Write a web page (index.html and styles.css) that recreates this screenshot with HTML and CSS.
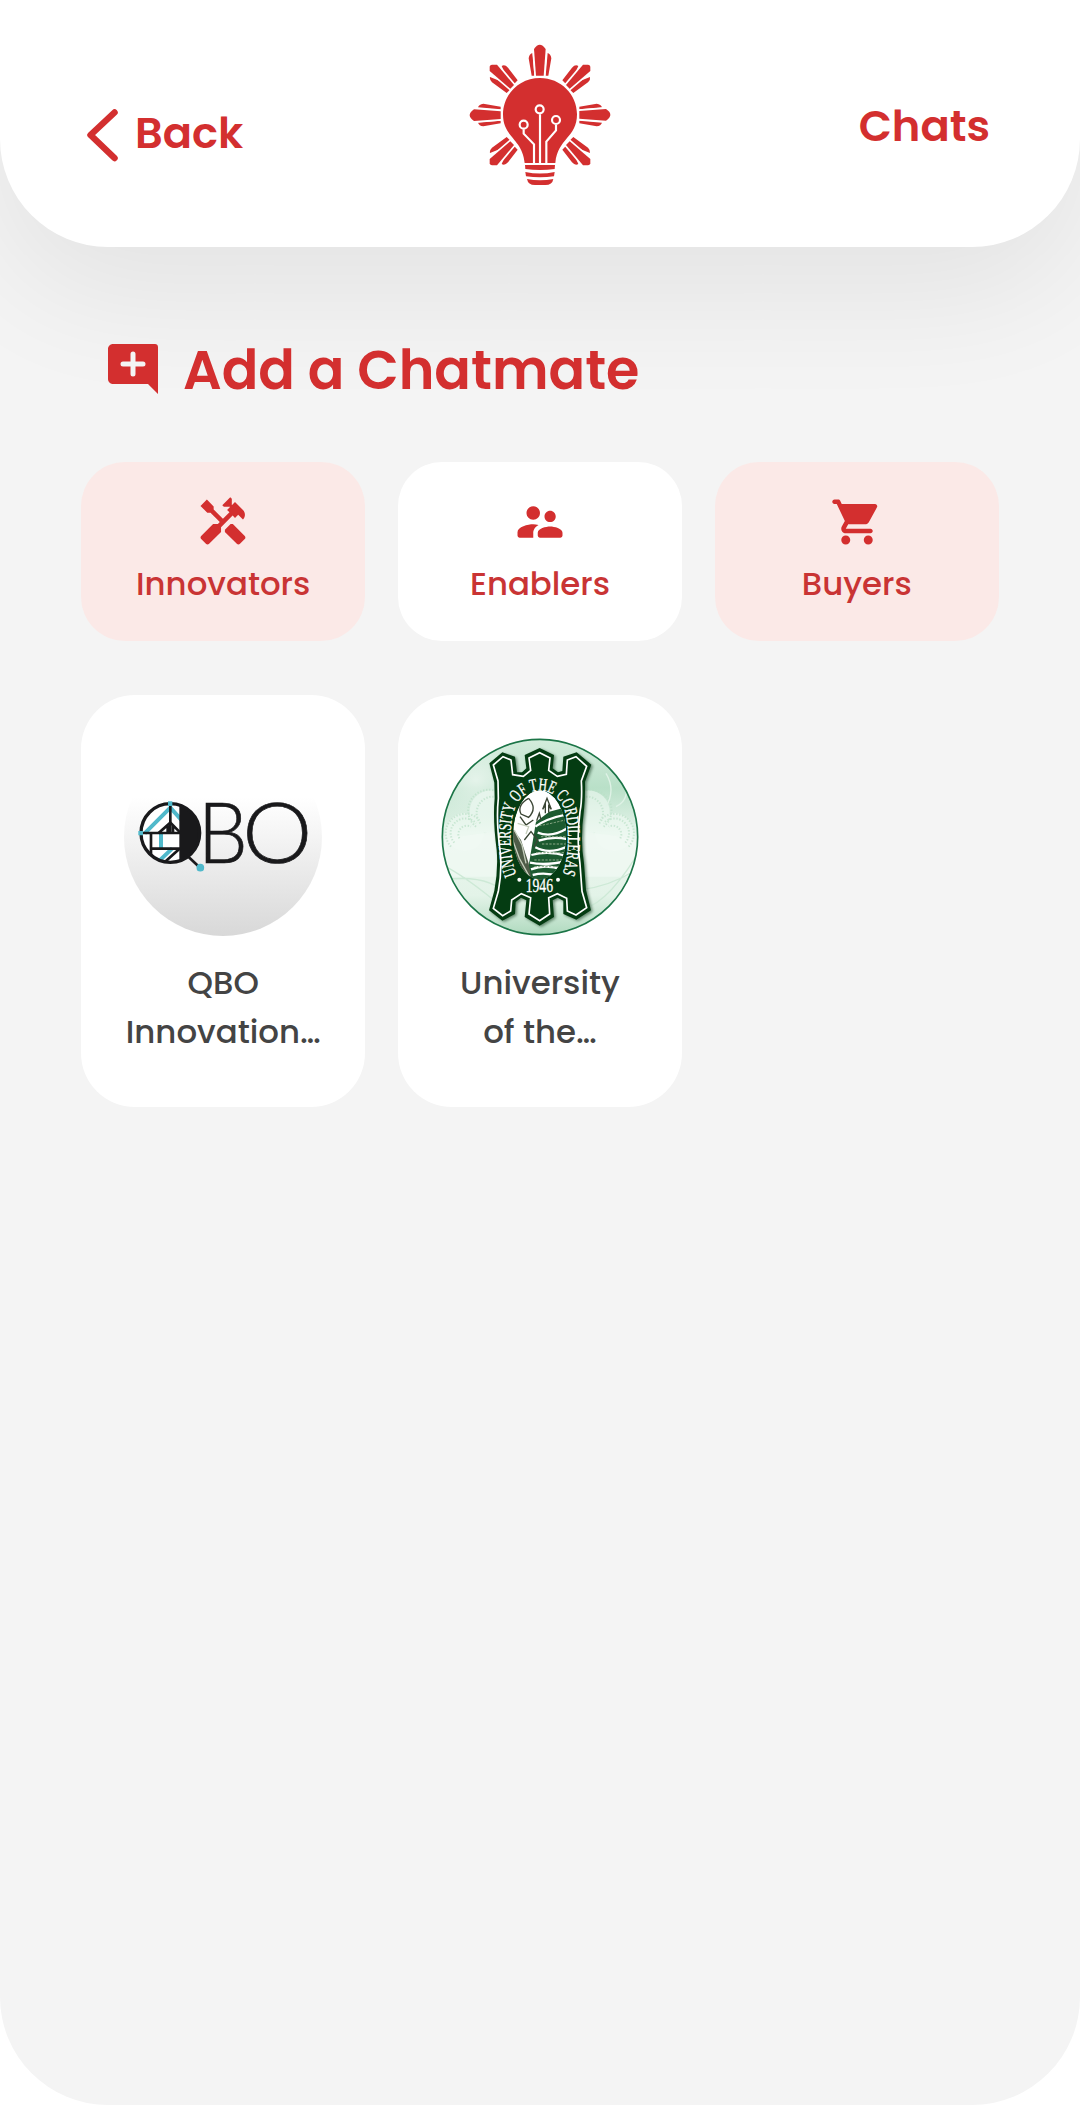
FILE: index.html
```html
<!DOCTYPE html>
<html lang="en">
<head>
<meta charset="utf-8">
<title>Add a Chatmate</title>
<link rel="stylesheet" href="styles.css">
</head>
<body>
<div class="screen">
  <header class="topbar">
    <a class="back"><svg class="chevron" viewBox="0 0 32 54"><path d="M28.500 4.500 4.500 27l24 23"/></svg><span>Back</span></a>
    <svg class="logo" viewBox="0 0 480 480">
      <defs>
        <g id="ray">
          <path d="M215 122 206 70Q208 57 217 54L223 122ZM265 122 274 70Q272 57 263 54L257 122Z"/>
          <path class="gap" d="M228 122 222 42Q239 16 257 42L251 122Z"/>
        </g>
        <g id="diag">
          <path d="M150 150 125 93Q134 87 144 98L173 136 163 146ZM150 150 90 126Q88 134 96 142L140 174 150 164Z"/>
          <path class="gap" d="M151 161 89 108V95Q90 89 96 89H111L162 150Z"/>
        </g>
      </defs>
      <use href="#ray"/>
      <use href="#ray" transform="rotate(90 240 240)"/>
      <use href="#ray" transform="rotate(-90 240 240)"/>
      <use href="#diag"/>
      <use href="#diag" transform="matrix(-1 0 0 1 480 0)"/>
      <use href="#diag" transform="matrix(1 0 0 -1 0 480)"/>
      <use href="#diag" transform="matrix(-1 0 0 -1 480 480)"/>
      <path class="halo" d="M240 129C178 129 129 178 129 238C129 308 187 310 194 384H286C293 310 351 308 351 238C351 178 302 129 240 129Z"/>
      <path d="M195 390H285L284 402Q240 408 196 402ZM196 411Q240 420 284 411L282 424Q240 430 198 424ZM201 432Q240 440 280 432Q277 450 256 450H225Q204 450 201 432Z"/>
      <g class="circuit">
        <path d="M240 238V385M191 283V296L222 328V385M288 270V286L259 320V385"/>
        <circle cx="239" cy="223" r="12"/><circle cx="191" cy="269" r="12"/><circle cx="288" cy="255" r="12"/>
      </g>
    </svg>
    <a class="chats">Chats</a>
  </header>

  <main class="content">
    <h1 class="title">
      <svg class="title-icon" viewBox="0 0 24 24"><path d="M22 3.200C22 2.500 21.500 2 20.800 2H4C2.900 2 2 2.900 2 4v12c0 1.100.9 2 2 2h14l4 4z"/><path class="plus" d="M12 6v8M8 10h8"/></svg>
      <span>Add a Chatmate</span>
    </h1>

    <nav class="tabs">
      <a class="tab">
        <svg class="icon" viewBox="0 0 24 24"><path d="M21.67 18.17l-5.3-5.3h-.99l-2.54 2.54v.99l5.3 5.3c.39.39 1.02.39 1.41 0l2.12-2.12c.39-.38.39-1.02 0-1.41z"/><path d="M17.34 10.19l1.41-1.41 2.12 2.12c1.17-1.17 1.17-3.07 0-4.24l-3.54-3.54-1.41 1.41V1.71L15.22 1l-3.54 3.54.71.71h2.83l-1.41 1.41 1.06 1.06-2.89 2.89-4.13-4.13V5.06L4.83 2.04 2 4.87 5.03 7.9h1.41l4.13 4.13-.85.85H7.6l-5.3 5.3c-.39.39-.39 1.02 0 1.41l2.12 2.12c.39.39 1.02.39 1.41 0l5.3-5.3v-2.12l5.15-5.15z"/></svg>
        <span>Innovators</span>
      </a>
      <a class="tab active">
        <svg class="icon" viewBox="0 0 24 24"><path d="M16.5 12c1.38 0 2.49-1.12 2.49-2.5S17.88 7 16.5 7 14 8.12 14 9.5s1.12 2.5 2.5 2.5zM9 11c1.66 0 2.99-1.34 2.99-3S10.66 5 9 5 6 6.34 6 8s1.34 3 3 3zm7.5 3c-1.83 0-5.5.92-5.5 2.75V18c0 .55.45 1 1 1h9c.55 0 1-.45 1-1v-1.25c0-1.83-3.67-2.75-5.5-2.75zM9 13c-2.33 0-7 1.17-7 3.5V18c0 .55.45 1 1 1h6v-2.25c0-.85.33-2.34 2.37-3.47C10.5 13.1 9.66 13 9 13z"/></svg>
        <span>Enablers</span>
      </a>
      <a class="tab">
        <svg class="icon" viewBox="0 0 24 24"><path d="M7 18c-1.1 0-1.99.9-1.99 2S5.9 22 7 22s2-.9 2-2-.9-2-2-2zM1 3c0 .55.45 1 1 1h1l3.6 7.59-1.35 2.44C4.52 15.37 5.48 17 7 17h11c.55 0 1-.45 1-1s-.45-1-1-1H7l1.1-2h7.45c.75 0 1.41-.41 1.75-1.03l3.58-6.49c.37-.66-.11-1.48-.87-1.48H5.21l-.67-1.43c-.16-.35-.52-.57-.9-.57H2c-.55 0-1 .45-1 1zm16 15c-1.1 0-1.99.9-1.99 2s.89 2 1.99 2 2-.9 2-2-.9-2-2-2z"/></svg>
        <span>Buyers</span>
      </a>
    </nav>

    <section class="people">
      <article class="card">
        <svg class="avatar" viewBox="41 26 594 594">
          <defs>
            <linearGradient id="fade" x1="0" y1="0" x2="0" y2="1"><stop offset=".3" stop-color="#fff"/><stop offset="1" stop-color="#d8d8d8"/></linearGradient>
            <clipPath id="qclip"><circle cx="180" cy="311" r="88"/></clipPath>
          </defs>
          <circle cx="338" cy="323" r="297" fill="url(#fade)"/>
          <circle cx="180" cy="311" r="88" fill="#fff"/>
          <g clip-path="url(#qclip)" fill="none">
            <path d="M103 312 180 235 215 274M152 313V356M145 396 186 357" stroke="#50b9cb" stroke-width="12"/>
            <path d="M180 222V308M90 311H212M122 311V385M122 358H212M166 396 206 360" stroke="#19191b" stroke-width="8"/>
            <path d="M144 312 180 280 212 312M172 310V290M188 310V290" stroke="#19191b" stroke-width="8"/>
            <path d="M207 215H280V410H207Z" fill="#19191b"/>
          </g>
          <circle cx="180" cy="311" r="88" fill="none" stroke="#19191b" stroke-width="10"/>
          <path d="M234 382 266 412" stroke="#19191b" stroke-width="8"/>
          <g fill="#50b9cb"><circle cx="270" cy="415" r="11.500"/><path d="M173 216h13v14h-13zM84 305h14v13H84z"/></g>
          <g class="wordmark"><text x="262" y="402" textLength="150" lengthAdjust="spacingAndGlyphs">B</text><text x="396" y="402" textLength="210" lengthAdjust="spacingAndGlyphs">O</text></g>
        </svg>
        <p class="name"><span>QBO</span><span>Innovation…</span></p>
      </article>
      <article class="card">
        <svg class="avatar" viewBox="35 24 594 594">
          <defs>
            <linearGradient id="mint" x1="0" y1="0" x2="0" y2="1"><stop offset="0" stop-color="#d3ecdc"/><stop offset=".25" stop-color="#b9e0c8"/><stop offset=".5" stop-color="#eaf6ee"/><stop offset=".8" stop-color="#e3f3e8"/><stop offset="1" stop-color="#b0dabf"/></linearGradient>
            <radialGradient id="glow"><stop offset="0" stop-color="#fff"/><stop offset="1" stop-color="#fff" stop-opacity="0"/></radialGradient>
            <clipPath id="seal"><circle cx="332" cy="321" r="293"/></clipPath>
            <clipPath id="view"><ellipse cx="331" cy="315" rx="80" ry="134"/></clipPath>
            <path id="arc" d="M262 434C240 390 236 270 262 222C292 168 368 168 398 222C424 270 420 390 398 434"/>
            <path id="shield" d="M180 100 219 67 257 80 263 127 278 127 291 115 286 75 331 54 374 75 370 115 386 127 399 123 402 80 442 67 486 104 467 155Q468 205 464 240Q452 330 464 400L470 480L485 541L441 569L402 552L402 512L385 503L370 511L374 561L331 587L286 561L291 511L275 503L259 516L257 552L219 572L179 541L195 482Q207 420 202 360Q190 270 196 205L195 158Z"/>
          </defs>
          <g clip-path="url(#seal)">
            <circle cx="332" cy="321" r="293" fill="url(#mint)"/>
            <ellipse cx="140" cy="150" rx="170" ry="130" fill="url(#glow)" opacity=".6"/>
            <g fill="#f1faf4" opacity=".6"><circle cx="185" cy="245" r="64"/><circle cx="107" cy="306" r="57"/><circle cx="477" cy="245" r="64"/><circle cx="554" cy="306" r="57"/></g>
            <path d="M35 330Q330 270 630 330V440H35Z" fill="#f1faf4" opacity=".7"/>
            <g class="lace"><path d="M140 290A62 62 0 0 1 210 188M153 280A49 49 0 0 1 205 202M65 350A56 56 0 0 1 150 270M75 338A43 43 0 0 1 140 280M90 325A26 26 0 0 1 125 290M523 290A62 62 0 0 0 453 188M510 280A49 49 0 0 0 458 202M598 350A56 56 0 0 0 513 270M588 338A43 43 0 0 0 523 280M573 325A26 26 0 0 0 538 290"/></g>
            <path d="M50 410Q140 460 250 560M40 450Q180 430 240 500M440 540Q520 540 620 380M450 480Q540 470 620 420" fill="none" stroke="#cde9d6" stroke-width="4"/>
            <path d="M530 230Q560 180 530 130M560 230Q600 210 590 160" fill="none" stroke="#dff2e6" stroke-width="4"/>
          </g>
          <circle cx="332" cy="321" r="293" fill="none" stroke="#1b7547" stroke-width="5"/>
          <use href="#shield" class="shield-shadow"/>
          <use href="#shield" fill="#043c12"/>
          <path d="M192 105 221 80 245 90 250 134 282 139 304 121 299 84 331 68 362 84 358 121 384 139 411 133 414 90 440 80 472 109 456 153Q459 210 452 245Q441 330 452 402L458 484L472 533L440 555L414 543L412 505L384 491L358 503L361 552L331 572L299 552L304 503L276 491L247 510L244 543L220 557L192 535L207 484Q219 420 212 360Q200 270 207 205L206 153Z" fill="none" stroke="#fff" stroke-width="5"/>
          <g clip-path="url(#view)">
            <path d="M245 175H418V455H245Z" fill="#fff"/>
            <path d="M320 275 360 245 418 230V455H290Z" fill="#1c5a30"/>
            <path d="M245 290 275 330 298 400 305 440 280 455 245 400Z" fill="#4f5c48"/>
            <path d="M298 205Q325 235 298 262L275 252Q262 225 298 205M272 260 290 285 312 270M348 250V225L340 238 353 205 366 238 358 228V248M322 272 330 250 335 270M285 330 305 305 325 330 315 350" fill="none" stroke="#3a4534" stroke-width="4"/>
            <path d="M255 300 278 345 290 400M250 330 270 385 300 440M265 280 298 290 290 312" fill="none" stroke="#c6cfbd" stroke-width="4"/>
            <path d="M318 290Q350 265 418 252M325 308Q370 325 418 292M328 332Q370 318 418 328M318 352Q360 375 418 348M306 375Q360 360 418 380M302 398Q350 408 418 392M305 418Q350 400 400 420M310 435Q350 425 390 440" fill="none" stroke="#fff" stroke-width="7"/>
            <path d="M330 287Q370 280 418 267M335 320H410M338 342H410M320 368H410M315 390H410M315 410H400" fill="none" stroke="#8aa886" stroke-width="3" stroke-dasharray="7 4"/>
          </g>
          <ellipse cx="331" cy="315" rx="82" ry="136" fill="none" stroke="#043c12" stroke-width="4"/>
          <g class="seal-text">
            <text><textPath href="#arc" textLength="596" lengthAdjust="spacingAndGlyphs">UNIVERSITY OF THE CORDILLERAS</textPath></text>
            <text x="289" y="486" textLength="82" lengthAdjust="spacingAndGlyphs">1946</text>
          </g>
          <circle cx="270" cy="449" r="6" fill="#fff"/><circle cx="386" cy="449" r="6" fill="#fff"/>
        </svg>
        <p class="name"><span>University</span><span>of the…</span></p>
      </article>
    </section>
  </main>
</div>
</body>
</html>
```
FILE: styles.css
```css
* { box-sizing: border-box; }

body {
  margin: 0;
  background: #fff;
  color: #444;
  font-family: Poppins, Inter, "Liberation Sans", sans-serif;
}

.screen {
  height: 2105px;
  overflow: hidden;
  background: #f4f4f4;
  border-radius: 0 0 108px 108px;
}

.topbar {
  display: grid;
  grid-template-columns: 1fr 160px 1fr;
  height: 247px;
  padding: 35px 90px 0 86px;
  background: #fff;
  border-radius: 0 0 108px 108px;
  box-shadow: 0 46px 125px rgba(0, 0, 0, .07);
  color: #d32f2f;
  font-size: 43.2px;
  font-weight: 600;
  line-height: 60px;
}

.back { display: flex; gap: 17px; padding-top: 68px; }
.chevron { width: 32px; height: 54px; margin-top: 5px; fill: none; stroke: #d32f2f; stroke-width: 6.5; stroke-linecap: round; stroke-linejoin: round; }
.logo { width: 160px; height: 160px; margin-left: 2px; fill: #d32f2f; }
.gap { stroke: #fff; stroke-width: 10; paint-order: stroke; }
.halo { stroke: #fff; stroke-width: 10; paint-order: stroke; }
.circuit { fill: none; stroke: #fff; stroke-width: 6.5; }
.chats { padding-top: 61px; text-align: right; }

.content { padding: 92px 81px 0; }

.title {
  display: flex;
  gap: 20px;
  height: 60px;
  margin: 0 0 63px;
  padding-left: 22px;
  color: #d32f2f;
  font-size: 54px;
  font-weight: 600;
  line-height: 62px;
}

.title-icon { width: 60px; height: 60px; fill: #d32f2f; }
.plus { fill: none; stroke: #f4f4f4; stroke-width: 2; stroke-linecap: round; }

.tabs, .people { display: grid; grid-template-columns: repeat(3, 1fr); gap: 32.4px; }

.tab {
  display: flex;
  flex-direction: column;
  align-items: center;
  height: 179px;
  padding-top: 33px;
  border-radius: 44px;
  background: #fbe9e7;
  color: #c93434;
  font-size: 32.4px;
  font-weight: 500;
  line-height: 49px;
}

.tab.active { background: #fff; }
.icon { width: 54px; height: 54px; margin-bottom: 10px; fill: #d32f2f; }

.people { margin-top: 54px; }

.card {
  display: flex;
  flex-direction: column;
  align-items: center;
  height: 412px;
  padding-top: 43px;
  border-radius: 54px;
  background: #fff;
}

.avatar { width: 198px; height: 198px; }

.name {
  display: flex;
  flex-direction: column;
  align-items: center;
  margin: 22px 0 0;
  font-size: 32.4px;
  font-weight: 500;
  line-height: 49px;
}

.wordmark { fill: #19191b; stroke: #19191b; stroke-width: 2; font-family: Lato, sans-serif; font-size: 253px; font-weight: 300; }
.lace { fill: none; stroke: #b9dfc6; stroke-width: 6; stroke-dasharray: 4 5; opacity: .7; }
.shield-shadow { fill: #355c40; opacity: .7; filter: blur(4px); transform: translate(5px, 4px); }
.seal-text { fill: #fff; font-family: "Liberation Serif", serif; font-size: 54px; stroke: #fff; stroke-width: 1; }
```
